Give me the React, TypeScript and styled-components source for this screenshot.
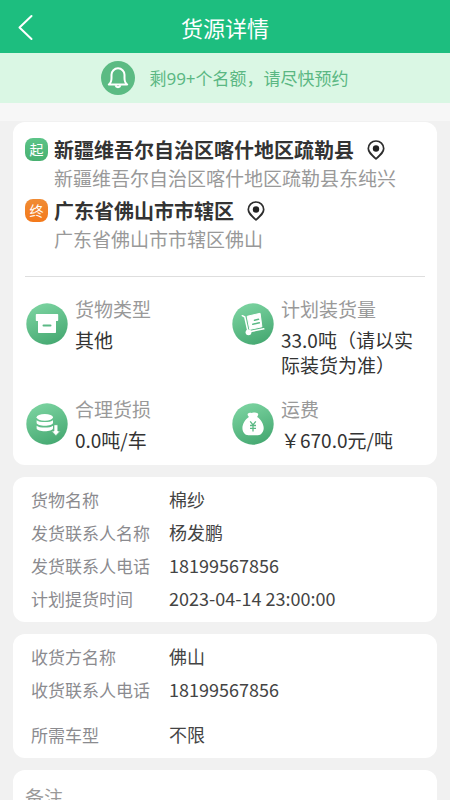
import React from 'react';
import styled, { createGlobalStyle } from 'styled-components';

const GlobalStyle = createGlobalStyle`
  * { box-sizing: border-box; }
  html { scrollbar-width: none; }
  body {
    margin: 0;
    background: #f1f1f1;
    color: #333;
    font-family: "Noto Sans CJK SC", "Noto Sans", sans-serif;
  }
  h1, h2, p, dl, dd { margin: 0; font-weight: 400; }
`;

const Header = styled.header`
  display: grid;
  grid-template-columns: 52px 1fr 52px;
  align-items: center;
  height: 53px;
  padding-top: 1px;
  background: #1dbe7f;
  color: #fff;
`;

const BackButton = styled.button`
  display: flex;
  align-items: center;
  height: 48px;
  padding: 0 0 0 17px;
  border: 0;
  background: none;
  color: inherit;
  cursor: pointer;
`;

const Title = styled.h1`
  font-size: 22px;
  line-height: 32px;
  text-align: center;
`;

const Notice = styled.div`
  display: flex;
  align-items: center;
  justify-content: center;
  gap: 14px;
  height: 50px;
  background: #daf7e4;
  color: #5bb783;
  font-family: "Noto Sans", "Noto Sans CJK SC", sans-serif;
  font-size: 17px;
  line-height: 25px;
`;

const Main = styled.main`
  display: flex;
  flex-direction: column;
  gap: 12px;
  padding: 19px 13px 12px;
  background: linear-gradient(#f7f7f7 18px, #f1f1f1 18px);
`;

const Card = styled.section`
  border-radius: 12px;
  background: #fff;
`;

const Places = styled.div`
  display: flex;
  flex-direction: column;
  gap: 5px;
  margin: 0 12px;
  padding: 12px 0 25px;
  border-bottom: 1px solid #dedede;
`;

const Place = styled.div`
  display: grid;
  grid-template-columns: 29px 1fr;
`;

const Badge = styled.span<{ $end?: boolean }>`
  margin-top: 4px;
  width: 23px;
  height: 23px;
  border-radius: 8px;
  background: ${({ $end }) =>
    $end ? 'linear-gradient(#f08c35, #f4791a)' : 'linear-gradient(#5cc488, #48b070)'};
  color: #fff;
  font-size: 14px;
  line-height: 22px;
  text-align: center;
`;

const PlaceName = styled.h2`
  display: flex;
  align-items: center;
  gap: 13px;
  font-size: 20px;
  font-weight: 700;
  line-height: 31px;
`;

const Address = styled.p`
  grid-column: 2;
  color: #999;
  font-size: 19px;
  line-height: 25px;
`;

const Facts = styled.dl`
  display: grid;
  grid-template-columns: 1fr 1fr;
  row-gap: 19px;
  padding: 19px 0 13px 12px;
`;

const Fact = styled.div`
  display: grid;
  grid-template-columns: 50px 1fr;
  grid-template-rows: auto 1fr;
  row-gap: 6px;
  padding-right: 12px;
  font-size: 19px;
  line-height: 25px;

  svg { grid-row: span 2; margin: 7px 0 0 1px; }
  dt { color: #999; }
`;

const Details = styled.dl`
  padding: 6px 18px 7px;
`;

const DetailRow = styled.div<{ $spaced?: boolean }>`
  display: grid;
  grid-template-columns: 138px 1fr;
  margin-top: ${({ $spaced }) => ($spaced ? 12 : 0)}px;
  line-height: 33px;

  dt { color: #8b8b8f; font-size: 17px; }
  dd { color: #444; font-size: 18px; }
`;

const Remark = styled.h2`
  padding: 14px 12px 15px;
  color: #999;
  font-size: 19px;
  line-height: 25px;
`;

const BackIcon = () => (
  <svg width="17" height="28" viewBox="0 0 17 28" fill="none" stroke="currentColor" strokeWidth="2" strokeLinecap="round" strokeLinejoin="round" aria-hidden="true">
    <path d="M14.5 3 2.5 14.5 14.5 26" />
  </svg>
);

const BellIcon = () => (
  <svg width="34" height="34" viewBox="0 0 34 34" fill="none" aria-hidden="true">
    <circle cx="17" cy="17" r="17" fill="#5bbb83" />
    <path d="M7.800 23.500c2-1.300 2.700-3 2.700-6.500v-3.200a6.500 6.500 0 0 1 13 0V17c0 3.500.7 5.200 2.700 6.500Z" stroke="#fff" strokeWidth="2" strokeLinejoin="round" />
    <path d="M14.500 24.300a2.600 2.600 0 0 0 5 0" stroke="#fff" strokeWidth="2" />
  </svg>
);

const PinIcon = () => (
  <svg width="18" height="20" viewBox="0 0 18 20" aria-hidden="true">
    <path d="M9 1a7.700 7.700 0 0 1 7.700 7.600c0 3.300-2.200 5.400-7.700 10.300C3.500 14 1.300 11.900 1.300 8.600A7.700 7.700 0 0 1 9 1Z" fill="none" stroke="#2d2d2d" strokeWidth="1.700" strokeLinejoin="round" />
    <circle cx="9" cy="8.500" r="3.200" fill="#222" />
  </svg>
);

const Disc = ({ id, children }: { id: string; children: React.ReactNode }) => (
  <svg width="42" height="42" viewBox="0 0 42 42" fill="none" aria-hidden="true">
    <defs>
      <linearGradient id={id} x1="0.3" y1="0" x2="0.7" y2="1">
        <stop stopColor="#7bd3a0" />
        <stop offset="1" stopColor="#45a871" />
      </linearGradient>
    </defs>
    <circle cx="21" cy="21" r="20.700" fill={`url(#${id})`} />
    {children}
  </svg>
);

const BoxIcon = () => (
  <Disc id="disc-box">
    <path d="M10.500 11h21a.7.7 0 0 1 .7.7v5.600a.7.7 0 0 1-.7.7H30v11.300a.7.7 0 0 1-.7.7H12.700a.7.7 0 0 1-.7-.7V18h-1.500a.7.7 0 0 1-.7-.7v-5.600a.7.7 0 0 1 .7-.7Z" fill="#fff" />
    <path d="M17.500 22.400h7" stroke="#5bb985" strokeWidth="2" strokeLinecap="round" />
  </Disc>
);

const TrolleyIcon = () => (
  <Disc id="disc-trolley">
    <path d="M10.300 12.700 12.800 14l3.300 15 15.700-3.200" stroke="#fff" strokeWidth="1.500" strokeLinecap="round" strokeLinejoin="round" />
    <circle cx="16.500" cy="29.300" r="2.900" fill="#fff" />
    <path d="m15.200 13.300 12.900-3 1.800 13.500-12.200 2.600Z" fill="#fff" stroke="#fff" strokeLinejoin="round" />
    <path d="m22.500 17.300 4-1M20.800 21.300l6.500-1.500" stroke="#5bb985" strokeWidth="1.500" strokeLinecap="round" />
  </Disc>
);

const StackIcon = () => (
  <Disc id="disc-stack">
    <ellipse cx="18.800" cy="14.300" rx="8.200" ry="3.400" fill="#fff" />
    <path d="M10.600 17.200c2.500 2.500 13.900 2.500 16.400 0v2.600c0 4-16.400 4-16.400 0Z" fill="#fff" />
    <path d="M10.600 22.700c2.500 2.500 13.900 2.500 16.400 0v2.600c0 4-16.400 4-16.400 0Z" fill="#fff" />
    <path d="M27.900 21.700h4v6.300h2.500L29.900 32.700l-4.500-4.700h2.500Z" fill="#fff" stroke="#55b37e" strokeWidth=".8" />
  </Disc>
);

const MoneyIcon = () => (
  <Disc id="disc-money">
    <path d="M16 10.600c1.500-1.700 3-.4 4.400-.8 1.600-.5 3.600-.7 5.200.4 1.200.8.5 2-.5 3.800 3.500 1.900 6.600 7.200 6.600 11 0 4-2.600 7.200-5.800 7.200H16.400c-3.600 0-6-3.200-6-7.200 0-4 3-9 6.500-11-.9-1.400-1.900-2.400-.9-3.400Z" fill="#fff" />
    <path d="m18.200 18.300 2.800 3.700 2.800-3.700M21 22v6.500M18 22.500h6M18 25.400h6" stroke="#5bb985" strokeWidth="1.300" />
  </Disc>
);

const facts = [
  { label: '货物类型', value: '其他', Icon: BoxIcon },
  { label: '计划装货量', value: '33.0吨（请以实际装货为准）', Icon: TrolleyIcon },
  { label: '合理货损', value: '0.0吨/车', Icon: StackIcon },
  { label: '运费', value: '￥670.0元/吨', Icon: MoneyIcon },
];

type Detail = { label: string; value: string; spaced?: boolean };

const shipping: Detail[] = [
  { label: '货物名称', value: '棉纱' },
  { label: '发货联系人名称', value: '杨发鹏' },
  { label: '发货联系人电话', value: '18199567856' },
  { label: '计划提货时间', value: '2023-04-14 23:00:00' },
];

const receiving: Detail[] = [
  { label: '收货方名称', value: '佛山' },
  { label: '收货联系人电话', value: '18199567856' },
  { label: '所需车型', value: '不限', spaced: true },
];

const DetailCard = ({ rows }: { rows: Detail[] }) => (
  <Card>
    <Details>
      {rows.map((row) => (
        <DetailRow key={row.label} $spaced={row.spaced}>
          <dt>{row.label}</dt>
          <dd>{row.value}</dd>
        </DetailRow>
      ))}
    </Details>
  </Card>
);

export default function App() {
  return (
    <>
      <GlobalStyle />
      <Header>
        <BackButton type="button" aria-label="返回"><BackIcon /></BackButton>
        <Title>货源详情</Title>
      </Header>
      <Notice>
        <BellIcon />
        <span>剩99+个名额，请尽快预约</span>
      </Notice>
      <Main>
        <Card>
          <Places>
            <Place>
              <Badge>起</Badge>
              <PlaceName>新疆维吾尔自治区喀什地区疏勒县<PinIcon /></PlaceName>
              <Address>新疆维吾尔自治区喀什地区疏勒县东纯兴</Address>
            </Place>
            <Place>
              <Badge $end>终</Badge>
              <PlaceName>广东省佛山市市辖区<PinIcon /></PlaceName>
              <Address>广东省佛山市市辖区佛山</Address>
            </Place>
          </Places>
          <Facts>
            {facts.map(({ label, value, Icon }) => (
              <Fact key={label}>
                <Icon />
                <dt>{label}</dt>
                <dd>{value}</dd>
              </Fact>
            ))}
          </Facts>
        </Card>
        <DetailCard rows={shipping} />
        <DetailCard rows={receiving} />
        <Card><Remark>备注</Remark></Card>
      </Main>
    </>
  );
}
